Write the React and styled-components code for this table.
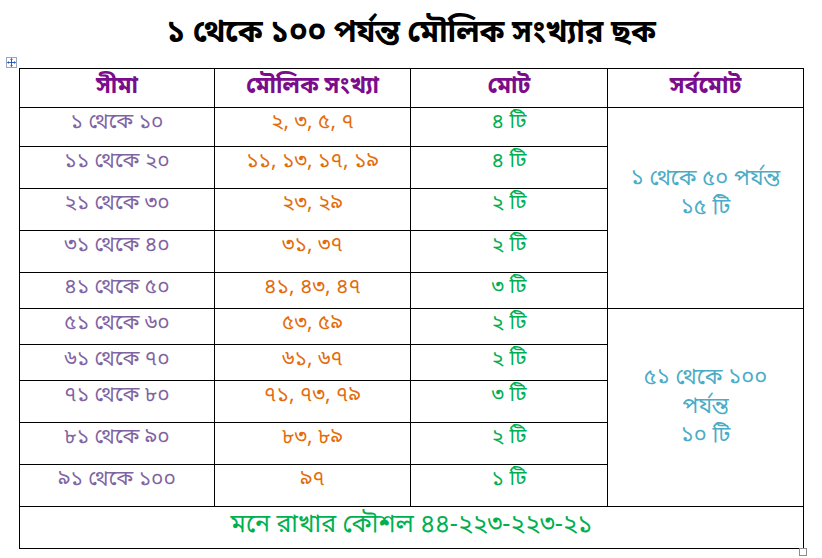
import React from 'react';
import styled, { createGlobalStyle } from 'styled-components';

const GlobalStyle = createGlobalStyle`
  html, body {
    margin: 0;
    padding: 0;
    background: #fff;
  }
  body {
    font-family: "Noto Sans Bengali", "Lohit Bengali", "Noto Sans", sans-serif;
  }
`

const Page = styled.div`
  width: 822px;
  height: 558px;
  background: #fff;
  overflow: hidden;
`

const Title = styled.h1`
  margin: 0;
  height: 57px;
  display: flex;
  justify-content: center;
  align-items: center;
  padding-top: 12px;
  box-sizing: border-box;
  font-size: 31px;
  font-weight: 700;
  color: #000;
  letter-spacing: -0.3px;
`

const TableArea = styled.div`
  display: flex;
  flex-direction: column;
  padding-left: 19px;
`

const HandleRow = styled.div`
  height: 11px;
  display: flex;
  align-items: flex-start;
  margin-left: -13px;
`

const Handle = styled.div`
  width: 9px;
  height: 9px;
  border: 1px solid #9aa7c0;
  background: #fff;
  display: flex;
  justify-content: center;
  align-items: center;
`

const Table = styled.table`
  border-collapse: collapse;
  table-layout: fixed;
  width: 785px;
  & td, & th {
    border: 1px solid #000;
    padding: 0;
    text-align: center;
  }
`

const Row = styled.tr`
  height: ${(p) => p.$h}px;
`

const HeadCell = styled.th`
  color: #7b0c8c;
  font-size: 23px;
  font-weight: 700;
  line-height: 30px;
  vertical-align: middle;
  padding-bottom: 3px !important;
`

const Cell = styled.td`
  color: ${(p) => p.$color};
  font-size: 21px;
  vertical-align: top;
  line-height: 26px;
  padding-top: 2px !important;
`

const GrandCell = styled.td`
  color: #4bacc6;
  font-size: 22px;
  line-height: 29px;
  vertical-align: middle;
  padding: 0 8px ${(p) => p.$extra}px !important;
`

const FooterCell = styled.td`
  color: #00b050;
  font-size: 25px;
  vertical-align: middle;
  line-height: 30px;
  padding-bottom: 4px !important;
`

const Corner = styled.div`
  width: 6px;
  height: 6px;
  border: 1px solid #8c8c8c;
  margin-left: 780px;
  margin-top: -1px;
`

const rows = [
  { range: '১ থেকে ১০', primes: '২, ৩, ৫, ৭', total: '৪ টি', h: 39 },
  { range: '১১ থেকে ২০', primes: '১১, ১৩, ১৭, ১৯', total: '৪ টি', h: 42 },
  { range: '২১ থেকে ৩০', primes: '২৩, ২৯', total: '২ টি', h: 42 },
  { range: '৩১ থেকে ৪০', primes: '৩১, ৩৭', total: '২ টি', h: 42 },
  { range: '৪১ থেকে ৫০', primes: '৪১, ৪৩, ৪৭', total: '৩ টি', h: 36 },
  { range: '৫১ থেকে ৬০', primes: '৫৩, ৫৯', total: '২ টি', h: 36 },
  { range: '৬১ থেকে ৭০', primes: '৬১, ৬৭', total: '২ টি', h: 36 },
  { range: '৭১ থেকে ৮০', primes: '৭১, ৭৩, ৭৯', total: '৩ টি', h: 42 },
  { range: '৮১ থেকে ৯০', primes: '৮৩, ৮৯', total: '২ টি', h: 42 },
  { range: '৯১ থেকে ১০০', primes: '৯৭', total: '১ টি', h: 42 },
]

function MoveIcon() {
  return (
    <svg width="9" height="9" viewBox="0 0 9 9">
      <path d="M4.5 0.5 V8.5 M0.5 4.5 H8.5" stroke="#2b5fb8" strokeWidth="1" fill="none" />
      <path d="M4.5 0 L3 1.8 H6 Z M4.5 9 L3 7.2 H6 Z M0 4.5 L1.8 3 V6 Z M9 4.5 L7.2 3 V6 Z" fill="#2b5fb8" />
    </svg>
  )
}

function App() {
  return (
    <Page>
      <GlobalStyle />
      <Title>১ থেকে ১০০ পর্যন্ত মৌলিক সংখ্যার ছক</Title>
      <TableArea>
        <HandleRow>
          <Handle><MoveIcon /></Handle>
        </HandleRow>
        <Table>
          <colgroup>
            <col style={{ width: 195 }} />
            <col style={{ width: 196 }} />
            <col style={{ width: 197 }} />
            <col style={{ width: 196 }} />
          </colgroup>
          <tbody>
            <Row $h={39}>
              <HeadCell>সীমা</HeadCell>
              <HeadCell>মৌলিক সংখ্যা</HeadCell>
              <HeadCell>মোট</HeadCell>
              <HeadCell>সর্বমোট</HeadCell>
            </Row>
            {rows.map((r, i) => (
              <Row $h={r.h} key={r.range}>
                <Cell $color="#8064a2">{r.range}</Cell>
                <Cell $color="#e36c0a">{r.primes}</Cell>
                <Cell $color="#00b050">{r.total}</Cell>
                {i === 0 && (
                  <GrandCell rowSpan={5} $extra={29}>
                    ১ থেকে ৫০ পর্যন্ত<br />১৫ টি
                  </GrandCell>
                )}
                {i === 5 && (
                  <GrandCell rowSpan={5} $extra={0}>
                    ৫১ থেকে ১০০<br />পর্যন্ত<br />১০ টি
                  </GrandCell>
                )}
              </Row>
            ))}
            <Row $h={42}>
              <FooterCell colSpan={4}>মনে রাখার কৌশল ৪৪-২২৩-২২৩-২১</FooterCell>
            </Row>
          </tbody>
        </Table>
        <Corner />
      </TableArea>
    </Page>
  )
}

export default App
